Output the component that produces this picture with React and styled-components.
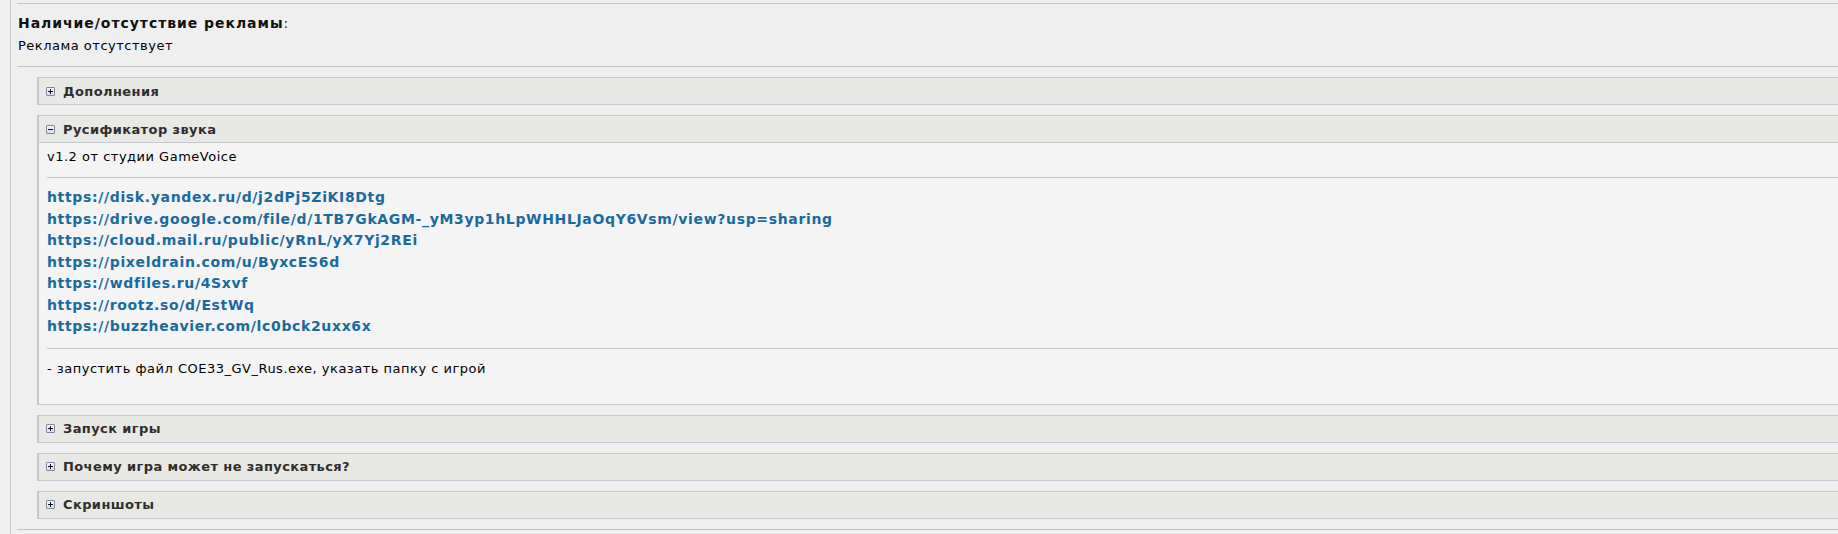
import React from 'react';
import styled, { createGlobalStyle } from 'styled-components';

const GlobalStyle = createGlobalStyle`
  html, body {
    margin: 0;
    padding: 0;
    background: #efefef;
    overflow: hidden;
  }
  body {
    font-family: "DejaVu Sans", Verdana, sans-serif;
    font-size: 13px;
    letter-spacing: 0.5px;
    color: #000;
  }
`;

const Page = styled.div`
  padding-left: 10px;
  height: 534px;
`;

const Column = styled.section`
  border-left: 1px solid #c5c9ce;
  padding: 3px 0 0 6px;
  width: 1860px;
  height: 100%;
  box-sizing: border-box;
`;

const Rule = styled.div`
  height: 1px;
  background: #bfc4ca;
`;

const Field = styled.div`
  padding: 10px 0 11px 1px;
`;

const FieldLabel = styled.div`
  line-height: 18px;
  font-size: 14px;
  font-weight: bold;
  letter-spacing: 0.95px;
  color: #111;

  span {
    font-weight: normal;
    color: #333;
  }
`;

const FieldValue = styled.div`
  line-height: 18px;
  margin-top: 5px;
`;

const Spoilers = styled.div`
  display: flex;
  flex-direction: column;
  gap: 10px;
  padding: 10px 0 10px 20px;
`;

const Spoiler = styled.div`
  border: 1px solid #c3c8ce;
  border-left-width: 2px;
`;

const SpoilerHead = styled.div`
  display: flex;
  align-items: center;
  gap: 8px;
  height: 26px;
  padding-left: 7px;
  background: #e8e8e4;
  font-weight: bold;
  letter-spacing: 0.4px;
  color: #2e2e2e;
  border-bottom: ${p => (p.$open ? '1px solid #c3c8ce' : 'none')};
`;

const Toggle = styled.span`
  position: relative;
  width: 7px;
  height: 7px;
  border: 1px solid #7d87a8;
  border-radius: 1px;
  background: linear-gradient(#f4f5fb, #d9ddec);

  &::before,
  &::after {
    content: '';
    position: absolute;
    background: #111;
  }
  &::before {
    left: 1px;
    top: 3px;
    width: 5px;
    height: 1px;
  }
  &::after {
    display: ${p => (p.$open ? 'none' : 'block')};
    left: 3px;
    top: 1px;
    width: 1px;
    height: 5px;
  }
`;

const SpoilerBody = styled.div`
  background: #f4f4f4;
  padding: 5px 0 26px 8px;
`;

const Line = styled.div`
  line-height: 18px;
`;

const InnerRule = styled.div`
  height: 1px;
  background: #c3c7cc;
  margin: ${p => p.$m || '11px 0 9px'};
`;

const Links = styled.div`
  display: flex;
  flex-direction: column;
`;

const Link = styled.a`
  display: block;
  line-height: 21.5px;
  font-size: 14px;
  letter-spacing: 0.65px;
  color: #1a6a9e;
  font-weight: bold;
  text-decoration: none;
`;

const links = [
  'https://disk.yandex.ru/d/j2dPj5ZiKI8Dtg',
  'https://drive.google.com/file/d/1TB7GkAGM-_yM3yp1hLpWHHLJaOqY6Vsm/view?usp=sharing',
  'https://cloud.mail.ru/public/yRnL/yX7Yj2REi',
  'https://pixeldrain.com/u/ByxcES6d',
  'https://wdfiles.ru/4Sxvf',
  'https://rootz.so/d/EstWq',
  'https://buzzheavier.com/lc0bck2uxx6x',
];

const Block = ({ title, open, children }) => (
  <Spoiler>
    <SpoilerHead $open={open}>
      <Toggle $open={open} />
      {title}
    </SpoilerHead>
    {open && <SpoilerBody>{children}</SpoilerBody>}
  </Spoiler>
);

const App = () => (
  <Page>
    <GlobalStyle />
    <Column>
      <Rule />
      <Field>
        <FieldLabel>
          Наличие/отсутствие рекламы<span>:</span>
        </FieldLabel>
        <FieldValue>Реклама отсутствует</FieldValue>
      </Field>
      <Rule />
      <Spoilers>
        <Block title="Дополнения" />
        <Block title="Русификатор звука" open>
          <Line>v1.2 от студии GameVoice</Line>
          <InnerRule />
          <Links>
            {links.map(l => (
              <Link key={l} href={l}>{l}</Link>
            ))}
          </Links>
          <InnerRule $m="10px 0 11px" />
          <Line>- запустить файл COE33_GV_Rus.exe, указать папку с игрой</Line>
        </Block>
        <Block title="Запуск игры" />
        <Block title="Почему игра может не запускаться?" />
        <Block title="Скриншоты" />
      </Spoilers>
      <Rule />
    </Column>
  </Page>
);

export default App;
